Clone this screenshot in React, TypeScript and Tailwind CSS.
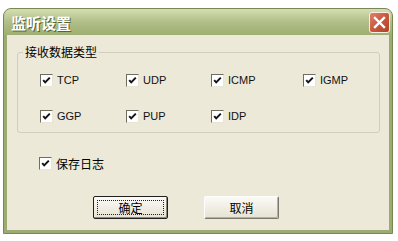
import React from "react";

// Windows XP (olive theme) style dialog: 监听设置

const cjk = { fontFamily: '"Noto Sans CJK SC", "Noto Sans", sans-serif' };
const latin = { fontFamily: '"Liberation Sans", "Noto Sans CJK SC", sans-serif' };

function CheckBox({ label, cjkLabel }: { label: string; cjkLabel?: boolean }) {
  return (
    <label className="flex items-center gap-[4px] h-[13px]">
      <span className="w-[13px] h-[13px] shrink-0 border border-t-[#6f6d62] border-l-[#6f6d62] border-b-[#e8e5d6] border-r-[#e8e5d6] bg-white flex items-center justify-center">
        <svg width="11" height="11" viewBox="0 0 11 11">
          <path d="M2.2 5.2 L4.2 7.4 L8.8 2.6" fill="none" stroke="#141414" strokeWidth="2" />
        </svg>
      </span>
      <span
        className={cjkLabel ? "text-[12px] leading-[14px] text-black" : "text-[11px] leading-[13px] text-[#111]"}
        style={cjkLabel ? cjk : latin}
      >
        {label}
      </span>
    </label>
  );
}

function Button({ children, isDefault }: { children: React.ReactNode; isDefault?: boolean }) {
  return (
    <button
      className={
        "w-[75px] h-[23px] rounded-[2px] bg-linear-to-b from-[#fbfaf6] to-[#e6e3d3] text-[12px] text-black flex items-center justify-center " +
        (isDefault
          ? "border border-[#1f1f1f] shadow-[inset_-1px_-1px_0_#8c8a7e]"
          : "border border-t-[#fdfdfb] border-l-[#fdfdfb] border-b-[#7a786c] border-r-[#7a786c] shadow-[inset_-1px_-1px_0_#b5b2a3]")
      }
      style={cjk}
    >
      {isDefault ? (
        <span className="w-[67px] h-[15px] border border-dotted border-[#222] flex items-center justify-center">
          {children}
        </span>
      ) : (
        <span>{children}</span>
      )}
    </button>
  );
}

export default function App() {
  const protocols = ["TCP", "UDP", "ICMP", "IGMP", "GGP", "PUP", "IDP"];
  return (
    <div className="w-[398px] h-[241px] bg-white pt-[8px] pl-[3px] overflow-hidden">
      <div className="w-[390px] h-[226px] rounded-t-[8px] bg-[#9cab72] border border-[#788852] flex flex-col overflow-hidden">
        {/* title bar */}
        <div className="h-[26px] shrink-0 flex items-center justify-between pl-[7px] pr-[2px] bg-linear-to-b from-[#d6deb2] via-[#b0be88] to-[#9fae70]">
          <span
            className="text-white font-bold text-[15px] leading-none [text-shadow:1px_1px_0_#56643a]"
            style={cjk}
          >
            监听设置
          </span>
          <div className="w-[21px] h-[21px] rounded-[3px] border border-[#f5efe6] bg-linear-to-br from-[#e0826a] via-[#c9583d] to-[#b04028] flex items-center justify-center">
            <svg width="13" height="13" viewBox="0 0 13 13">
              <path d="M2 2 L11 11 M11 2 L2 11" stroke="white" strokeWidth="2.4" strokeLinecap="square" />
            </svg>
          </div>
        </div>

        {/* client area */}
        <div className="flex-1 mx-[3px] mb-[3px] bg-[#ece9d8] flex flex-col">
          <fieldset className="mt-[10px] ml-[10px] mr-[9px] border border-[#d0cebf] rounded-[3px] pt-[15px] pb-[9px]">
            <legend className="ml-[5px] px-[2px] text-[12px] leading-[14px] text-black" style={cjk}>
              接收数据类型
            </legend>
            <div className="pl-[22px] grid grid-cols-[86px_85px_92px_1fr] gap-y-[23px]">
              {protocols.map((p) => (
                <CheckBox key={p} label={p} />
              ))}
            </div>
          </fieldset>

          <div className="mt-[24px] ml-[32px]">
            <CheckBox label="保存日志" cjkLabel />
          </div>

          <div className="mt-[26px] ml-[86px] flex gap-[36px]">
            <Button isDefault>确定</Button>
            <Button>取消</Button>
          </div>
        </div>
      </div>
    </div>
  );
}
